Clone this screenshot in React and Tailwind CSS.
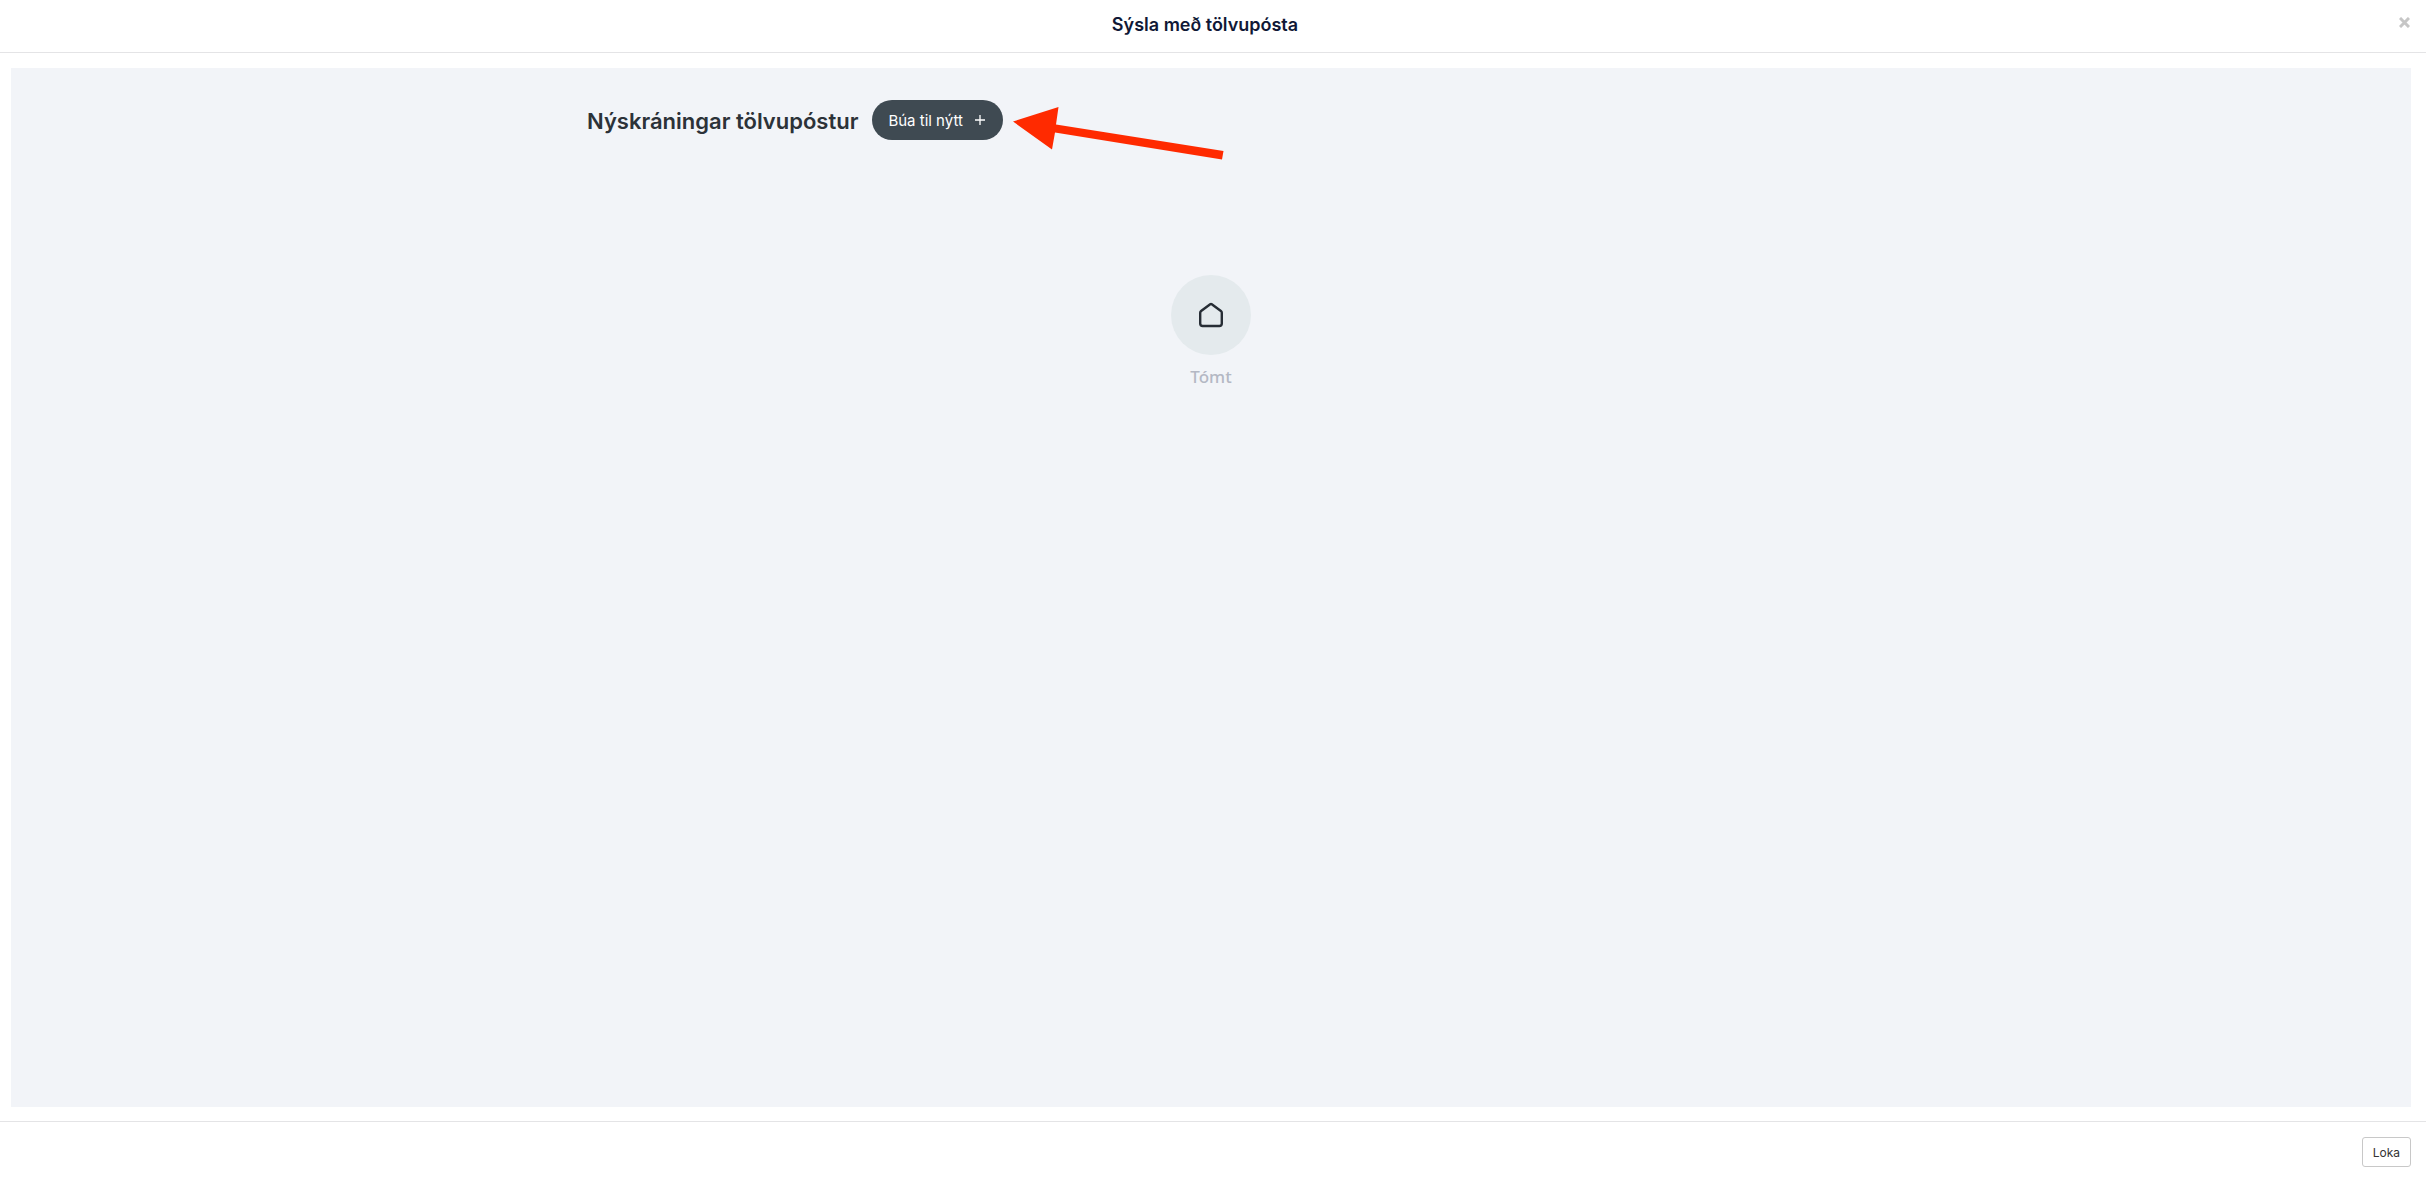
import React from 'react';

const ModalHeader = () => (
  <header className="flex h-[53px] shrink-0 items-center border-b border-[#e4e4e6] pl-4 pr-4">
    <div className="flex-1" />
    <h1 className="mr-4 pb-[2px] text-[18px] leading-6 font-semibold text-[#101836]">Sýsla með tölvupósta</h1>
    <div className="flex flex-1 justify-end pb-2">
      <button type="button" aria-label="Loka glugga" className="text-[#c6c6c6]">
        <svg width="11" height="11" viewBox="0 0 11 11" stroke="currentColor" strokeWidth="3">
          <path d="M1 1 L10 10 M10 1 L1 10" />
        </svg>
      </button>
    </div>
  </header>
);

const PointerArrow = () => (
  <svg
    className="pointer-events-none absolute top-[6px] left-full ml-[10px]"
    width="211"
    height="54"
    viewBox="0 0 211 54"
    fill="#ff2a00"
    aria-hidden="true"
  >
    <path d="M0 15.5 L45.5 1 L43 18.5 L210.5 45 L209 53.5 L42 26.5 L39 43.5 Z" />
  </svg>
);

const EmptyState = () => (
  <div className="mt-[135px] flex flex-col items-center">
    <div className="flex h-20 w-20 items-center justify-center rounded-full bg-[#e4eaed]">
      <svg
        width="24"
        height="26"
        viewBox="0 0 24 26"
        fill="none"
        stroke="#262d35"
        strokeWidth="2.4"
        strokeLinejoin="round"
        aria-hidden="true"
      >
        <path d="M11.2 2.2 Q12 1.6 12.8 2.2 L21.9 9 Q22.8 9.7 22.8 10.8 V21.5 Q22.8 24 20.3 24 H3.7 Q1.2 24 1.2 21.5 V10.8 Q1.2 9.7 2.1 9 Z" />
      </svg>
    </div>
    <p className="mt-[10px] font-['Noto_Sans',sans-serif] text-[17px] leading-6 font-medium text-[#b4b8c4]">
      Tómt
    </p>
  </div>
);

export default function App() {
  return (
    <div className="flex min-h-screen flex-col bg-white font-[Inter,sans-serif]">
      <ModalHeader />

      <main className="mt-[15px] mr-[15px] mb-[14px] ml-[11px] flex-1 bg-[#f2f4f8] pt-8">
        <div className="mx-auto max-w-[1248px]">
          <div className="flex items-center gap-[14px]">
            <h2 className="pt-[2px] text-[22px] leading-8 font-semibold text-[#2c3238]">Nýskráningar tölvupóstur</h2>
            <div className="relative">
              <button
                type="button"
                className="flex h-10 items-center gap-[10px] rounded-full bg-[#3f4a52] px-4 pt-[2px] text-[15px] text-white"
              >
                Búa til nýtt
                <svg width="14" height="14" viewBox="0 0 14 14" stroke="currentColor" strokeWidth="1.3" aria-hidden="true">
                  <path d="M7 1 V11 M2 6 H12" />
                </svg>
              </button>
              <PointerArrow />
            </div>
          </div>
          <EmptyState />
        </div>
      </main>

      <footer className="flex h-[62px] shrink-0 justify-end border-t border-[#e4e4e6] pt-[15px] pr-[15px]">
        <button
          type="button"
          className="h-[30px] rounded-[3px] border border-[#c8c8c8] bg-white px-[10px] pt-[1px] text-[12px] text-[#333333]"
        >
          Loka
        </button>
      </footer>
    </div>
  );
}
